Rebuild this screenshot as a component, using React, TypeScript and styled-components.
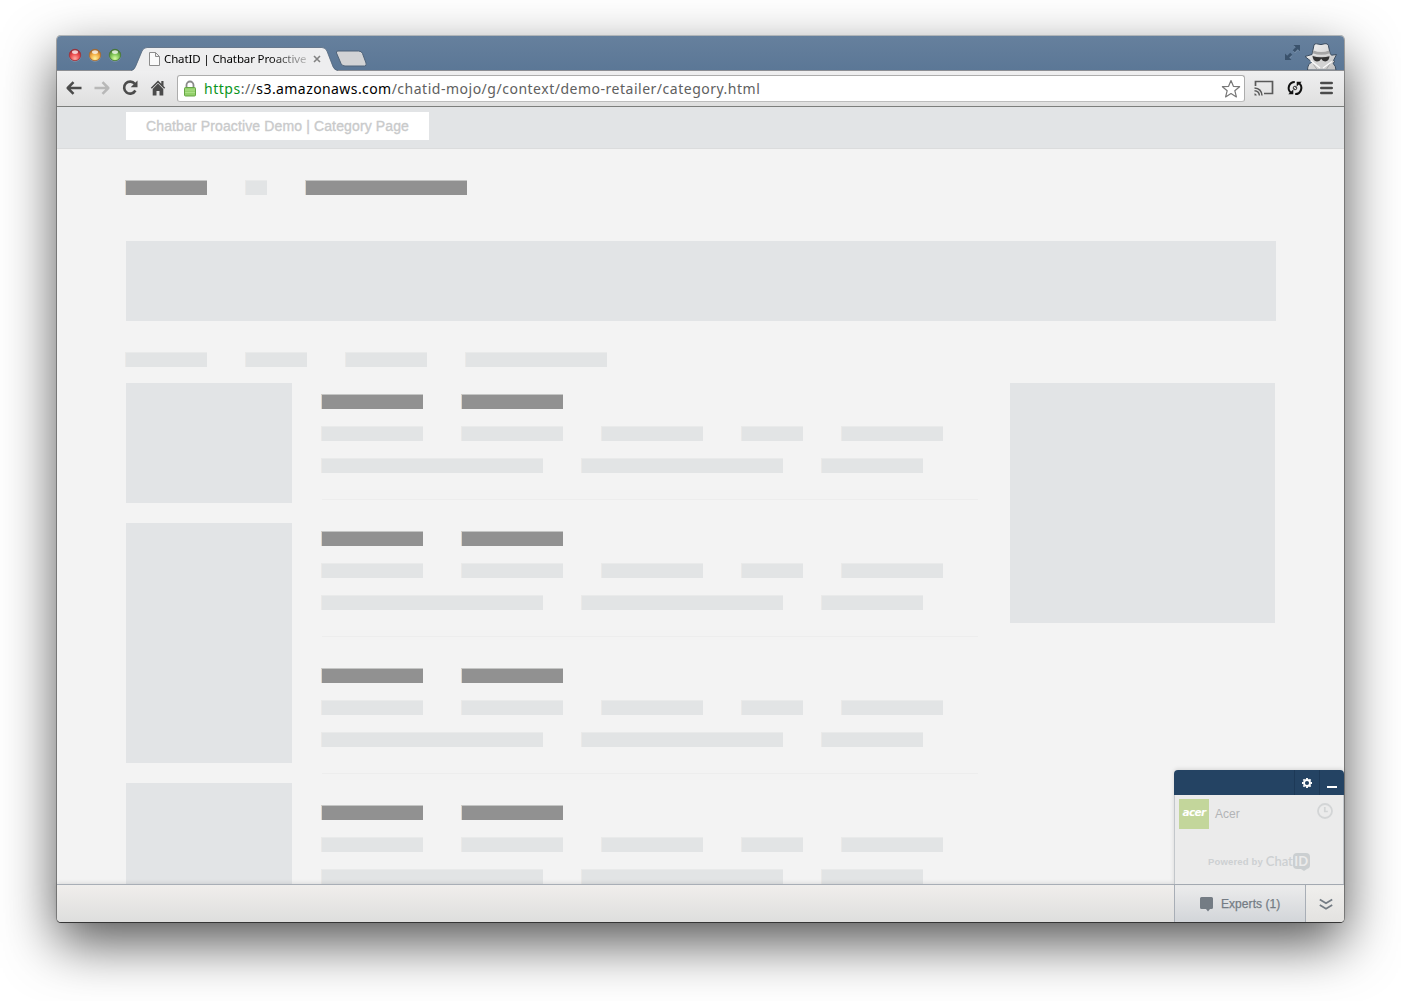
import React from "react";
import styled, { createGlobalStyle } from "styled-components";

const Global = createGlobalStyle`
  html, body { margin: 0; padding: 0; background: #fff; }
  body { overflow: hidden; font-family: "Liberation Sans", Arial, sans-serif; }
  * { box-sizing: border-box; }
  svg { display: block; flex: none; }
`;

const Desktop = styled.main`
  width: 1401px;
  height: 1001px;
  padding: 36px 57px;
  overflow: hidden;
`;

const BrowserWindow = styled.div`
  width: 1287px;
  height: 886px;
  display: flex;
  flex-direction: column;
  border-radius: 4px;
  box-shadow: 0 -1px 0 0 #b0b5b8, 0 0 0 1px rgba(0, 0, 0, 0.3), 0 1px 0 0 #505050,
    0 21px 54px rgba(0, 0, 0, 0.67);
`;

const TitleBar = styled.header`
  height: 35px;
  flex: none;
  display: flex;
  align-items: flex-end;
  padding-left: 11px;
  background: linear-gradient(#66809d, #5b7796);
  border-bottom: 1px solid #8c8e93;
  border-radius: 4px 4px 0 0;
`;

const Lights = styled.div`
  display: flex;
  gap: 6px;
  align-self: flex-start;
  margin-top: 12px;
`;

const Tab = styled.div`
  position: relative;
  width: 207px;
  height: 24px;
  margin: 0 0 -1px 9px;
  padding: 0 13px 0 18px;
  display: flex;
  align-items: center;
`;

const TabShape = styled.svg`
  position: absolute;
  left: 0;
  top: 0;
`;

const PageIcon = styled.svg`
  position: relative;
`;

const CloseIcon = styled.svg`
  position: relative;
  margin-left: 7px;
`;

const TabTitle = styled.span`
  position: relative;
  width: 142px;
  margin-left: 4px;
  font: 11.5px/16px "Noto Sans", sans-serif;
  letter-spacing: -0.13px;
  white-space: nowrap;
  overflow: hidden;
  color: transparent;
  background: linear-gradient(90deg, #000 0, #000 105px, #bbb 142px);
  background-clip: text;
  -webkit-background-clip: text;
`;

const NewTab = styled.svg`
  margin: 0 0 3px -4px;
`;

const TitleRight = styled.div`
  margin-left: auto;
  height: 34px;
  display: flex;
  align-items: flex-end;
  padding-right: 6px;
  gap: 4px;
`;

const FullscreenIcon = styled.svg`
  margin-bottom: 10px;
`;

const Toolbar = styled.div`
  height: 36px;
  flex: none;
  display: flex;
  align-items: center;
  padding: 0 7px 0 8px;
  background: linear-gradient(#efeff0, #dfdfdf);
  border-bottom: 1px solid #7c7e7c;
`;

const NavIcons = styled.div`
  display: flex;
  gap: 8px;
  margin: 0 1px 1px -1px;
`;

const Omnibox = styled.div`
  width: 1068px;
  height: 27px;
  margin-left: 8px;
  padding: 0 3px 0 5px;
  display: flex;
  align-items: center;
  background: #fff;
  border: 1px solid #adadad;
  border-bottom-color: #bdbdbd;
  border-radius: 3px;
`;

const Url = styled.div`
  flex: 1;
  margin-left: 7px;
  font: 14px/20px "Noto Sans", sans-serif;
  letter-spacing: 0.51px;
  color: #606060;
  white-space: nowrap;
`;

const Scheme = styled.span`
  color: #0a9520;
`;
const Host = styled.span`
  color: #000;
  letter-spacing: 0.42px;
`;

const ToolIcons = styled.div`
  display: flex;
  align-items: center;
  margin-left: auto;
  margin-bottom: 1px;
  gap: 10px;
`;

const Page = styled.div`
  flex: 1;
  min-height: 0;
  overflow: hidden;
  background: #f3f3f3;
`;

const PageHeader = styled.div`
  height: 42px;
  padding: 5px 69px;
  background: #e2e4e6;
  border-bottom: 1px solid #dbdcdd;
`;

const PageTitle = styled.h1`
  margin: 0;
  width: 303px;
  height: 28px;
  padding-left: 20px;
  background: #fff;
  color: #c9cacb;
  font-size: 14px;
  line-height: 28px;
  font-weight: 400;
  -webkit-text-stroke: 0.35px #c9cacb;
  letter-spacing: 0.13px;
  white-space: nowrap;
`;

const BarRow = styled.div<{ $top?: number }>`
  display: flex;
  gap: 38px;
  margin-top: ${(p) => p.$top ?? 0}px;
`;

const Bar = styled.div<{ $w: number; $dark?: boolean }>`
  width: ${(p) => p.$w}px;
  height: 15px;
  flex: none;
  background: ${(p) => (p.$dark ? "#919191" : "#e2e4e5")};
  border-top: 1px solid ${(p) => (p.$dark ? "#c4c5c4" : "#e9eaea")};
  border-left: 1px solid ${(p) => (p.$dark ? "#dfd5c8" : "#ebe9e7")};
`;

const Content = styled.div`
  padding: 31px 68px 0;
`;

const Banner = styled.div`
  width: 1150px;
  height: 80px;
  margin: 46px 0 0 1px;
  background: #e2e4e6;
`;

const Columns = styled.div`
  display: flex;
  margin: 16px 0 0 1px;
`;

const Side = styled.div`
  width: 166px;
  display: flex;
  flex-direction: column;
  gap: 20px;
`;

const Block = styled.div<{ $h: number }>`
  height: ${(p) => p.$h}px;
  flex: none;
  background: #e2e4e6;
`;

const Listing = styled.div`
  width: 657px;
  margin-left: 29px;
`;

const Product = styled.article`
  height: 137px;
  padding-top: 11px;
`;

const Rule = styled.div`
  height: 1px;
  margin: 26px 0 0 1px;
  background: #ededed;
`;

const Promo = styled.div`
  width: 265px;
  margin-left: 32px;
`;

const BottomBar = styled.footer`
  position: relative;
  height: 38px;
  flex: none;
  display: flex;
  justify-content: flex-end;
  background: linear-gradient(#f0eeec, #dededd);
  border-top: 1px solid #a8aeb6;
  border-radius: 0 0 4px 4px;
  box-shadow: 0 -1px 4px rgba(0, 0, 0, 0.1);
`;

const Experts = styled.div`
  width: 131px;
  display: flex;
  align-items: center;
  padding-left: 25px;
  gap: 8px;
  color: #747c84;
  font-size: 12px;
  letter-spacing: 0.06px;
  -webkit-text-stroke: 0.25px #747c84;
  border-left: 1px solid #a8aeb6;
  background: linear-gradient(#ececec, #d2d5d9);
`;

const ExpertsIcon = styled.svg`
  margin-top: 1px;
`;

const Collapse = styled.div`
  width: 39px;
  display: flex;
  align-items: center;
  justify-content: center;
  padding: 2px 0 0 1px;
  border-left: 1px solid #a8aeb6;
  border-radius: 0 0 4px 0;
  background: linear-gradient(#f0efed, #e3e2e0);
`;

const ChatPanel = styled.section`
  position: absolute;
  right: 0;
  bottom: 38px;
  width: 170px;
  height: 114px;
  border-radius: 4px 4px 0 0;
  overflow: hidden;
  display: flex;
  flex-direction: column;
  box-shadow: 0 -1px 4px rgba(0, 0, 0, 0.12);
`;

const ChatHead = styled.div`
  height: 25px;
  flex: none;
  display: flex;
  justify-content: flex-end;
  background: #244363;
`;

const HeadButton = styled.div<{ $w: number }>`
  width: ${(p) => p.$w}px;
  display: flex;
  align-items: center;
  justify-content: center;
  border-left: 1px solid #1d3957;
`;

const ChatBody = styled.div`
  flex: 1;
  padding: 4px 4px 0;
  background: #ebebeb;
  border-left: 1px solid #c3c7cb;
  border-right: 1px solid #c3c7cb;
`;

const Contact = styled.div`
  display: flex;
  align-items: center;
  color: #b2b4b6;
  font-size: 12px;
`;

const Logo = styled.div`
  display: flex;
  justify-content: center;
  width: 30px;
  height: 30px;
  margin-right: 6px;
  background: #c3d69b;
  color: #fff;
  font: italic 700 10.5px/27px "DejaVu Sans", "Liberation Sans", sans-serif;
  letter-spacing: -0.6px;
`;

const Clock = styled.svg`
  margin: -7px 6px 0 auto;
`;

const Powered = styled.div`
  display: flex;
  align-items: center;
  margin: 23px 0 0 29px;
  height: 18px;
  color: #cdd0d2;
  font-size: 9.5px;
  letter-spacing: 0.15px;
  font-weight: 700;
  white-space: nowrap;
`;

const Brand = styled.span`
  margin-left: 3px;
  font: 600 13px/18px Lato, sans-serif;
  letter-spacing: -0.05px;
`;

const BrandBadge = styled.span`
  position: relative;
  width: 17px;
  height: 16px;
  border-radius: 4px;
  background: #cbcfd1;
  color: #ebebeb;
  font: 700 13px/16px Lato, sans-serif;
  text-align: center;
  &::after {
    content: "";
    position: absolute;
    left: 8px;
    top: 16px;
    border: 3px solid transparent;
    border-top: 2px solid #cbcfd1;
  }
`;

const Light = ({ id, dark, mid, glow }: { id: string; dark: string; mid: string; glow: string }) => (
  <svg width="14" height="15" viewBox="0 0 14 15">
    <defs>
      <radialGradient id={id} cx=".5" cy=".8" r=".75">
        <stop offset="0" stopColor={glow} />
        <stop offset=".55" stopColor={mid} />
        <stop offset="1" stopColor={dark} />
      </radialGradient>
    </defs>
    <circle cx="7" cy="7.8" r="6" fill="#9db0c4" opacity=".6" />
    <circle cx="7" cy="7" r="5.7" fill={`url(#${id})`} stroke={dark} strokeWidth=".8" />
    <ellipse cx="7" cy="4.1" rx="3" ry="1.9" fill="#fff" opacity=".75" />
  </svg>
);

const Arrow = ({ flip, color }: { flip?: boolean; color: string }) => (
  <svg width="20" height="20" viewBox="0 0 20 20">
    <path
      transform={flip ? "translate(20 0) scale(-1 1)" : undefined}
      d="M17.500 10H4.500M9.500 4.200 3.700 10l5.800 5.800"
      fill="none"
      stroke={color}
      strokeWidth="2.500"
      strokeLinejoin="round"
    />
  </svg>
);

const Incognito = () => (
  <svg width="34" height="28" viewBox="0 0 34 28">
    <defs>
      <linearGradient id="coat" x1="0" x2="1" y1="0" y2="1">
        <stop offset="0" stopColor="#f6f6f6" />
        <stop offset="1" stopColor="#bfbfbf" />
      </linearGradient>
    </defs>
    <path
      d="M3.500 28C3.500 23.500 5.500 21 8 20L6 18.500 1 14.500 8 12.500 10 3q.5-1.500 2.500-1.200L17 2.600l4-.9q2.500-.4 3.300 1.500l1.700 8 1.500 2 5-.7-3 6 1.500 1-2 1.700q3 3 3 7z"
      fill="url(#coat)"
      stroke="#3c4d60"
      strokeWidth="1"
      strokeLinejoin="round"
    />
    <path d="M9.500 8.500q7.500 3 15.700 0l.6 2.700q-8.300 3.300-17.300 0z" fill="#a6a6a6" />
    <path d="M8 13q9 2.500 18 .3l-1.500 7L17 26.500 9.500 20z" fill="#d2d2d2" />
    <path d="M8.500 14q4 1.200 8 1.200h1.500q4 0 7.500-1-.3 5-4.300 5.200-2.700 0-4-2.600Q16 19.500 13 19.500q-4-.1-4.500-5.500z" fill="#333" />
    <path d="M6.500 18.500 16 26M28 19.500 19 26" fill="none" stroke="#fafafa" strokeWidth="1.500" />
    <path d="m9.500 22.500 4 5.500M25.500 22.500 22 28" fill="none" stroke="#9b9b9b" strokeWidth=".8" />
  </svg>
);

const Products = [0, 1, 2, 3];

export default function App() {
  return (
    <>
      <Global />
      <Desktop>
        <BrowserWindow>
          <TitleBar>
            <Lights>
              <Light id="close" dark="#9c2c34" mid="#ec4b4d" glow="#ffaaa2" />
              <Light id="minimise" dark="#a5672c" mid="#f3ac43" glow="#fff39c" />
              <Light id="zoom" dark="#44752f" mid="#7cc255" glow="#d6ffa0" />
            </Lights>
            <Tab>
              <TabShape width="207" height="24" viewBox="0 0 206 24" preserveAspectRatio="none">
                <path
                  d="M0 24q3-.5 4.500-4L11 4Q12.500.5 16 .5H190Q193.500.5 195 4l6 16q1.500 3.500 5 4z"
                  fill="#eeeeef"
                />
                <path
                  d="M0 23.500q3-.5 4.500-4L11 4Q12.500.5 16 .5H190Q193.500.5 195 4l6 15.500q1.500 3.500 5 4"
                  fill="none"
                  stroke="#56697e"
                  strokeWidth=".8"
                />
              </TabShape>
              <PageIcon width="11" height="14" viewBox="0 0 11 14">
                <path d="M.5.5h6l4 4v9H.5zM6.500.5v4h4" fill="#fafafa" stroke="#8c8c8c" />
              </PageIcon>
              <TabTitle>ChatID | Chatbar Proactive</TabTitle>
              <CloseIcon width="8" height="8" viewBox="0 0 8 8">
                <path d="m1 1 6 6M7 1 1 7" stroke="#828282" strokeWidth="1.600" />
              </CloseIcon>
            </Tab>
            <NewTab width="34" height="17" viewBox="0 0 34 17">
              <path
                d="M4 1h20.500q3 0 4 2.500l3.500 9.500q1 3-1.500 3H11q-3 0-4-2.500L2.500 3Q1.800 1 4 1z"
                fill="#d2d3d5"
                stroke="#4f6379"
              />
            </NewTab>
            <TitleRight>
              <FullscreenIcon width="15" height="15" viewBox="0 0 15 15">
                <path
                  d="M9 1h6v6l-2-2-3 3-2-2 3-3zM0 10l2 2 3-3 2 2-3 3 2 2H0z"
                  fill="#9fb2c6"
                  opacity=".5"
                />
                <path d="M8.500 0H15v6.500l-2.200-2.200-3 3L7.700 5.200l3-3zM0 8.500l2.200 2.200 3-3 2.100 2.100-3 3L6.500 15H0z" fill="#3a526c" />
              </FullscreenIcon>
              <Incognito />
            </TitleRight>
          </TitleBar>
          <Toolbar>
            <NavIcons>
              <Arrow color="#4b4b4b" />
              <Arrow color="#b8b8b8" flip />
              <svg width="20" height="20" viewBox="0 0 20 20">
                <path d="M14.800 5.800A6 6 0 1 0 15.400 12.500" fill="none" stroke="#4b4b4b" strokeWidth="2.600" />
                <path d="M17.500 2.500v6.800h-6.800z" fill="#4b4b4b" />
              </svg>
              <svg width="20" height="20" viewBox="0 0 20 20">
                <path d="M10 2.500 2.800 9.700l1.100 1.100L10 4.700l6.100 6.100 1.100-1.100-1.700-1.700V3h-2.200v2.800z" fill="#4b4b4b" />
                <path d="M10 5.600 4.700 10.900V17.500h3.800v-4.600h3v4.600h3.800v-6.600z" fill="#4b4b4b" />
              </svg>
            </NavIcons>
            <Omnibox>
              <svg width="14" height="18" viewBox="0 0 14 18">
                <path d="M3.500 9V5a3.500 3.500 0 0 1 7 0v4" fill="none" stroke="#8a8a8a" strokeWidth="1.800" />
                <rect x="1.500" y="7.500" width="11" height="8.500" rx="1" fill="#93d06b" stroke="#65a544" />
                <path d="M2 10h10M2 12.500h10" stroke="#b2e28f" strokeWidth=".8" />
              </svg>
              <Url>
                <Scheme>https</Scheme>://<Host>s3.amazonaws.com</Host>/chatid-mojo/g/context/demo-retailer/category.html
              </Url>
              <svg width="20" height="20" viewBox="0 0 20 20">
                <path
                  d="m10 1.500 2.400 5.800 6.200.4-4.800 4 1.600 6.200L10 14.500l-5.400 3.400 1.600-6.200-4.800-4 6.200-.4z"
                  fill="#fff"
                  stroke="#777"
                  strokeWidth="1.200"
                  strokeLinejoin="round"
                />
              </svg>
            </Omnibox>
            <ToolIcons>
              <svg width="20" height="16" viewBox="0 0 20 16">
                <path d="M1.500 6V1.500h17v12H10" fill="none" stroke="#5a5a5a" strokeWidth="1.700" />
                <path d="M.5 8q7 .5 7.500 7.500M.5 10.800q4.500.2 4.900 4.700" fill="none" stroke="#5a5a5a" strokeWidth="1.500" />
                <path d="M.5 13.200q2 .2 2.300 2.300H.5z" fill="#5a5a5a" />
              </svg>
              <svg width="22" height="18" viewBox="0 0 22 18">
                <path d="M10.800 2.900A6.100 6.100 0 0 0 7.300 14M11.200 15.100A6.100 6.100 0 0 0 14.700 4" fill="none" stroke="#111" strokeWidth="2" />
                <path d="M4.300 15.300h5V10.500zM17.700 2.700h-5v4.800z" fill="#111" />
                <circle cx="11" cy="9" r="1.800" fill="#eee" stroke="#333" />
                <path d="m10.300 9.700 1.400-1.400" stroke="#333" strokeWidth=".8" />
              </svg>
              <svg width="21" height="18" viewBox="0 0 21 18">
                <path d="M5.300 4h10.400M5.300 9h10.400M5.300 14h10.400" stroke="#4b4b4b" strokeWidth="2.600" strokeLinecap="round" />
              </svg>
            </ToolIcons>
          </Toolbar>
          <Page>
            <PageHeader>
              <PageTitle>Chatbar Proactive Demo | Category Page</PageTitle>
            </PageHeader>
            <Content>
              <BarRow>
                <Bar $w={82} $dark />
                <Bar $w={22} />
                <Bar $w={162} $dark />
              </BarRow>
              <Banner />
              <BarRow $top={31}>
                <Bar $w={82} />
                <Bar $w={62} />
                <Bar $w={82} />
                <Bar $w={142} />
              </BarRow>
              <Columns>
                <Side>
                  <Block $h={120} />
                  <Block $h={240} />
                  <Block $h={240} />
                </Side>
                <Listing>
                  {Products.map((n) => (
                    <Product key={n}>
                      <BarRow>
                        <Bar $w={102} $dark />
                        <Bar $w={102} $dark />
                      </BarRow>
                      <BarRow $top={17}>
                        <Bar $w={102} />
                        <Bar $w={102} />
                        <Bar $w={102} />
                        <Bar $w={62} />
                        <Bar $w={102} />
                      </BarRow>
                      <BarRow $top={17}>
                        <Bar $w={222} />
                        <Bar $w={202} />
                        <Bar $w={102} />
                      </BarRow>
                      <Rule />
                    </Product>
                  ))}
                </Listing>
                <Promo>
                  <Block $h={240} />
                </Promo>
              </Columns>
            </Content>
          </Page>
          <BottomBar>
            <Experts>
              <ExpertsIcon width="13" height="15" viewBox="0 0 13 15">
                <path d="M1.500 0h10q1.500 0 1.500 1.500v9q0 1.500-1.500 1.500H10L8 14.500 6 12H1.500Q0 12 0 10.500v-9Q0 0 1.500 0z" fill="#747c84" />
              </ExpertsIcon>
              Experts (1)
            </Experts>
            <Collapse>
              <svg width="14" height="13" viewBox="0 0 14 13">
                <path d="m.8 1.500 6.200 3.700 6.200-3.700M.8 7l6.200 3.700L13.200 7" fill="none" stroke="#747c84" strokeWidth="1.800" />
              </svg>
            </Collapse>
            <ChatPanel>
              <ChatHead>
                <HeadButton $w={25}>
                  <svg width="10" height="10" viewBox="0 0 10 10">
                    <circle cx="5" cy="5" r="3" fill="none" stroke="#fff" strokeWidth="1.900" />
                    <path
                      d="M5 0v1.500M5 8.500V10M0 5h1.500M8.500 5H10M1.400 1.400l1 1M7.600 7.600l1 1M1.400 8.600l1-1M7.600 2.400l1-1"
                      stroke="#fff"
                      strokeWidth="1.900"
                    />
                  </svg>
                </HeadButton>
                <HeadButton $w={25}>
                  <svg width="10" height="10" viewBox="0 0 10 10">
                    <path d="M0 9h10" stroke="#fff" strokeWidth="2" />
                  </svg>
                </HeadButton>
              </ChatHead>
              <ChatBody>
                <Contact>
                  <Logo>acer</Logo>
                  Acer
                  <Clock width="16" height="16" viewBox="0 0 16 16">
                    <circle cx="8" cy="8" r="7" fill="none" stroke="#d3d5d6" strokeWidth="1.800" />
                    <path d="M7.800 4v4.500h3" fill="none" stroke="#d3d5d6" strokeWidth="1.700" />
                  </Clock>
                </Contact>
                <Powered>
                  Powered by
                  <Brand>Chat</Brand>
                  <BrandBadge>ID</BrandBadge>
                </Powered>
              </ChatBody>
            </ChatPanel>
          </BottomBar>
        </BrowserWindow>
      </Desktop>
    </>
  );
}
